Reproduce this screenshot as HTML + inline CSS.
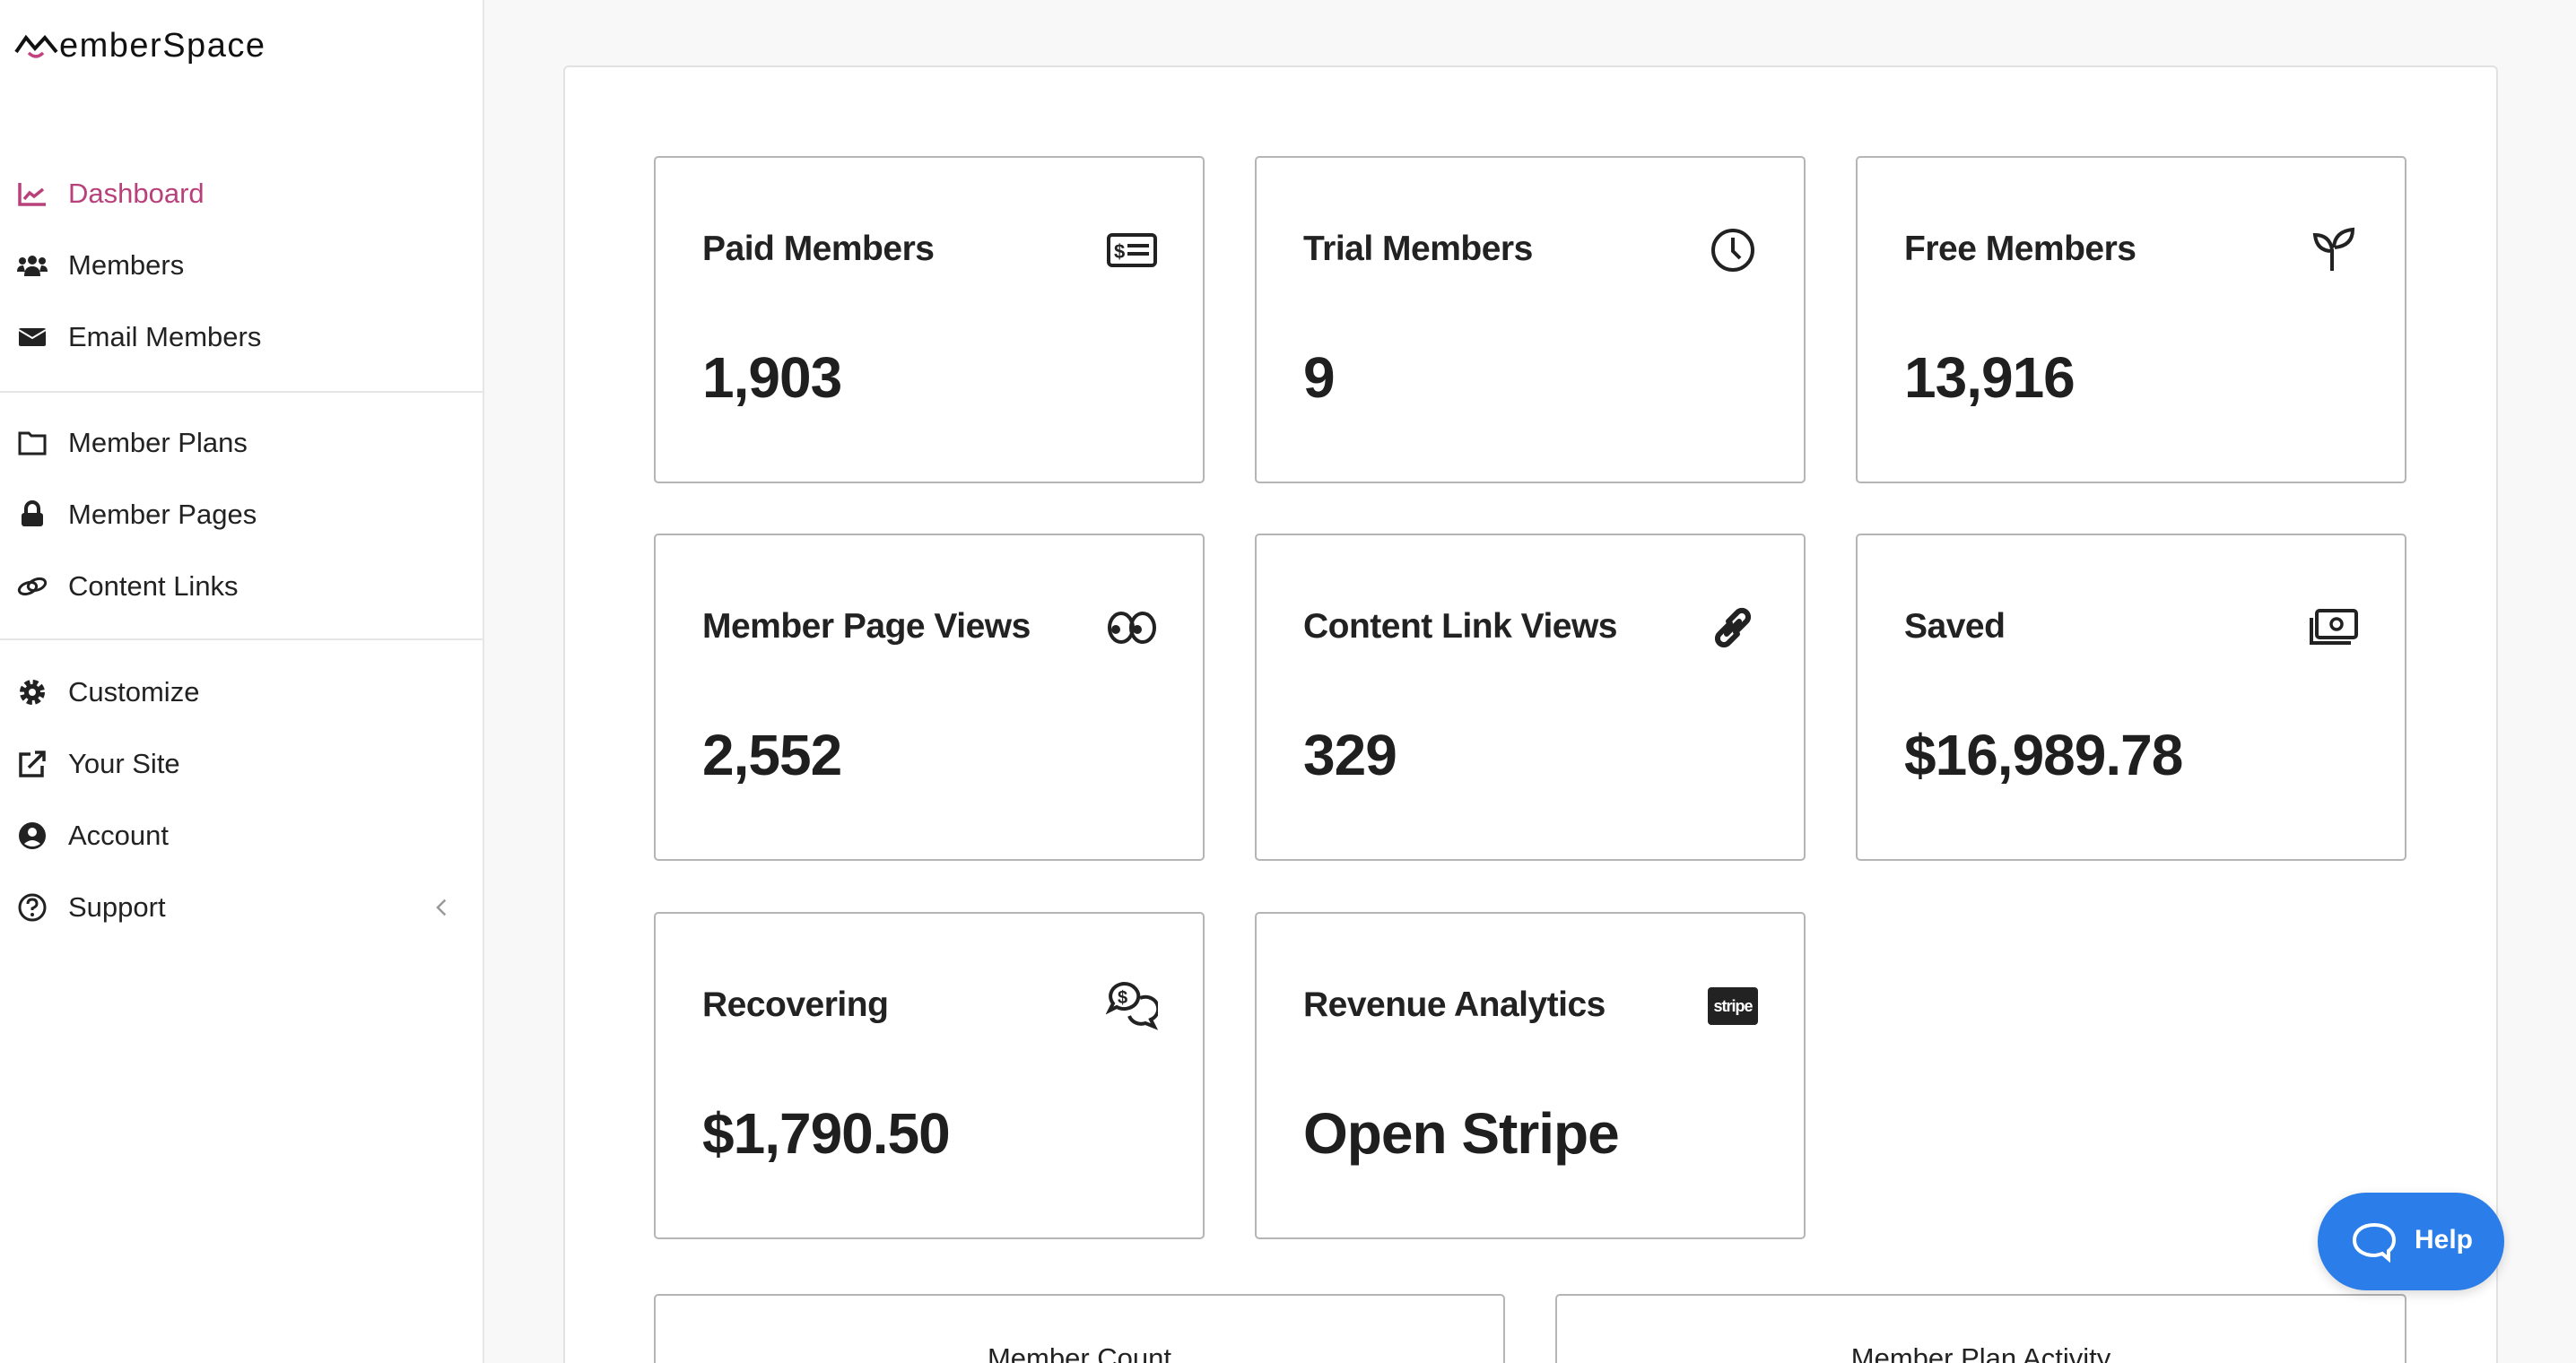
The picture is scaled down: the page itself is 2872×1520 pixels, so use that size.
<!DOCTYPE html>
<html><head><meta charset="utf-8"><style>
*{margin:0;padding:0;box-sizing:border-box}
html,body{width:2872px;height:1520px;overflow:hidden}
body{background:#f8f8f8;font-family:"Liberation Sans",sans-serif;color:#222;position:relative}
#side{position:absolute;left:0;top:0;width:540px;height:1520px;background:#fff;border-right:2px solid #e6e6e6}
.logo{position:absolute;left:16px;top:30px;font-size:38px;letter-spacing:1.5px;color:#111}
.nav{position:absolute;left:0;width:540px;height:60px;display:flex;align-items:center;font-size:31px;color:#222}
.nav svg{position:absolute;left:18px;width:36px;height:36px}
.nav span{position:absolute;left:76px}
.sep{position:absolute;left:0;width:540px;height:2px;background:#e6e6e6}
#main{position:absolute;left:628px;top:73px;width:2157px;height:1447px;background:#fff;border:2px solid #e2e2e2;border-bottom:none;border-radius:6px 6px 0 0}
.card{position:absolute;width:614px;height:365px;border:2px solid #b5b5b5;border-radius:5px;background:#fff}
.card .t{position:absolute;left:52px;top:80px;font-size:39px;font-weight:bold;color:#222;letter-spacing:-0.5px}
.card .v{position:absolute;left:52px;top:208px;font-size:64px;font-weight:bold;color:#1f1f1f;letter-spacing:-1px}
.card svg{position:absolute;right:50px;top:74px;width:58px;height:58px}
.bc{position:absolute;top:1443px;width:949px;height:77px;border:2px solid #b5b5b5;border-bottom:none;border-radius:5px 5px 0 0;background:#fff;text-align:center;font-size:31px;padding-top:52px;overflow:hidden;white-space:nowrap}
#help{position:absolute;left:2584px;top:1330px;width:208px;height:109px;border-radius:55px;background:#2b7de9;box-shadow:0 4px 12px rgba(0,0,0,.15);color:#fff;font-weight:bold;font-size:30px}
</style></head><body>
<div id="side">
<div class="logo"><svg width="50" height="36" viewBox="0 0 50 36" style="vertical-align:-5px"><path d="M2 26 L13 10 L23 22 L34 10 L47 26" fill="none" stroke="#111" stroke-width="4"/><path d="M16 27 Q24 35 32 27" fill="none" stroke="#c2417e" stroke-width="3.5"/></svg>emberSpace</div>

<div class="nav" style="top:186px;color:#b8417b"><svg viewBox="0 0 36 36"><path d="M4 6V30H33M9 24L15 17L20 21L30 13" fill="none" stroke="#b8417b" stroke-width="3.5"/></svg><span>Dashboard</span></div>
<div class="nav" style="top:266px"><svg viewBox="0 0 36 36"><circle cx="18" cy="12" r="5" fill="#222"/><circle cx="7" cy="13" r="4" fill="#222"/><circle cx="29" cy="13" r="4" fill="#222"/><path d="M9 30Q9 19 18 19Q27 19 27 30Z M1 25Q1 18 8 18L10 25Z M35 25Q35 18 28 18L26 25Z" fill="#222"/></svg><span>Members</span></div>
<div class="nav" style="top:346px"><svg viewBox="0 0 36 36"><rect x="3" y="8" width="30" height="20" rx="2" fill="#222"/><path d="M3 10L18 19L33 10" stroke="#fff" stroke-width="2" fill="none"/></svg><span>Email Members</span></div>
<div class="sep" style="top:436px"></div>
<div class="nav" style="top:464px"><svg viewBox="0 0 36 36"><path d="M4 7H14L17 10H32V30H4Z" fill="none" stroke="#222" stroke-width="3"/></svg><span>Member Plans</span></div>
<div class="nav" style="top:544px"><svg viewBox="0 0 36 36"><path d="M11 16V11A7 7 0 0 1 25 11V16" fill="none" stroke="#222" stroke-width="4"/><rect x="6" y="16" width="24" height="15" rx="3" fill="#222"/></svg><span>Member Pages</span></div>
<div class="nav" style="top:624px"><svg viewBox="0 0 36 36"><ellipse cx="13" cy="20" rx="10" ry="6" fill="none" stroke="#222" stroke-width="3" transform="rotate(-20 13 20)"/><ellipse cx="23" cy="16" rx="10" ry="6" fill="none" stroke="#222" stroke-width="3" transform="rotate(-20 23 16)"/></svg><span>Content Links</span></div>
<div class="sep" style="top:712px"></div>
<div class="nav" style="top:742px"><svg viewBox="0 0 36 36"><circle cx="18" cy="18" r="10" fill="none" stroke="#222" stroke-width="8" stroke-dasharray="5 2.9"/><circle cx="18" cy="18" r="9" fill="#222"/><circle cx="18" cy="18" r="4" fill="#fff"/></svg><span>Customize</span></div>
<div class="nav" style="top:822px"><svg viewBox="0 0 36 36"><path d="M16 7H5V31H29V20" fill="none" stroke="#222" stroke-width="3.5"/><path d="M14 22L30 6M21 5H31V15" fill="none" stroke="#222" stroke-width="3.5"/></svg><span>Your Site</span></div>
<div class="nav" style="top:902px"><svg viewBox="0 0 36 36"><circle cx="18" cy="18" r="15" fill="#222"/><circle cx="18" cy="14" r="5" fill="#fff"/><path d="M9 27Q18 19 27 27Q18 33 9 27Z" fill="#fff"/></svg><span>Account</span></div>
<div class="nav" style="top:982px"><svg viewBox="0 0 36 36"><circle cx="18" cy="18" r="14" fill="none" stroke="#222" stroke-width="3"/><path d="M13 14Q13 9 18 9Q23 9 23 14Q23 17 18 19V21" fill="none" stroke="#222" stroke-width="3"/><circle cx="18" cy="26" r="2" fill="#222"/></svg><span>Support</span><svg viewBox="0 0 36 36" style="left:478px;width:30px;height:30px"><path d="M22 8L12 18L22 28" fill="none" stroke="#999" stroke-width="3"/></svg></div>
</div>

<div id="main"></div>

<div class="card" style="left:729px;top:174px"><div class="t">Paid Members</div><div class="v">1,903</div><svg viewBox="0 0 58 58"><rect x="3" y="12" width="52" height="34" rx="4" fill="none" stroke="#222" stroke-width="4"/><text x="9" y="38" font-size="22" font-weight="bold" font-family="Liberation Sans" fill="#222">$</text><path d="M24 24H48M24 33H48" stroke="#222" stroke-width="4"/></svg></div>
<div class="card" style="left:1399px;top:174px"><div class="t">Trial Members</div><div class="v">9</div><svg viewBox="0 0 58 58"><circle cx="29" cy="29" r="22" fill="none" stroke="#222" stroke-width="4"/><path d="M29 15V30L37 38" fill="none" stroke="#222" stroke-width="4"/></svg></div>
<div class="card" style="left:2069px;top:174px"><div class="t">Free Members</div><div class="v">13,916</div><svg viewBox="0 0 58 58"><path d="M27 52V28M27 30Q10 30 8 12Q24 12 27 28M29 26Q30 8 50 6Q50 24 30 26" fill="none" stroke="#222" stroke-width="4"/></svg></div>
<div class="card" style="left:729px;top:595px"><div class="t">Member Page Views</div><div class="v">2,552</div><svg viewBox="0 0 58 58"><ellipse cx="17" cy="29" rx="13" ry="16" fill="none" stroke="#222" stroke-width="4"/><ellipse cx="41" cy="29" rx="13" ry="16" fill="none" stroke="#222" stroke-width="4"/><circle cx="11" cy="31" r="5" fill="#222"/><circle cx="35" cy="31" r="5" fill="#222"/></svg></div>
<div class="card" style="left:1399px;top:595px"><div class="t">Content Link Views</div><div class="v">329</div><svg viewBox="0 0 58 58"><path d="M26 24L14 36A7 7 0 0 0 24 46L34 36M32 34L44 22A7 7 0 0 0 34 12L24 22M22 36L36 22" fill="none" stroke="#222" stroke-width="6" stroke-linecap="round"/></svg></div>
<div class="card" style="left:2069px;top:595px"><div class="t">Saved</div><div class="v">$16,989.78</div><svg viewBox="0 0 58 58"><rect x="10" y="10" width="44" height="30" rx="3" fill="none" stroke="#222" stroke-width="4"/><circle cx="32" cy="25" r="6" fill="none" stroke="#222" stroke-width="3.5"/><path d="M4 18V46H48" fill="none" stroke="#222" stroke-width="4"/></svg></div>
<div class="card" style="left:729px;top:1017px"><div class="t">Recovering</div><div class="v">$1,790.50</div><svg viewBox="0 0 58 58"><path d="M20 4A16 14 0 1 1 12 30L4 34L8 26A16 14 0 0 1 20 4Z" fill="none" stroke="#222" stroke-width="4"/><text x="13" y="26" font-size="20" font-weight="bold" font-family="Liberation Sans" fill="#222">$</text><path d="M38 20A14 13 0 0 1 50 44L54 52L44 48A14 13 0 0 1 26 40" fill="none" stroke="#222" stroke-width="4"/></svg></div>
<div class="card" style="left:1399px;top:1017px"><div class="t">Revenue Analytics</div><div class="v">Open Stripe</div><svg viewBox="0 0 58 58"><rect x="1" y="8" width="56" height="42" rx="4" fill="#222"/><text x="29" y="35" text-anchor="middle" font-size="18" font-weight="bold" font-family="Liberation Sans" fill="#fff" letter-spacing="-1">stripe</text></svg></div>

<div class="bc" style="left:729px">Member Count</div>
<div class="bc" style="left:1734px">Member Plan Activity</div>

<div id="help"><svg width="52" height="46" viewBox="0 0 52 46" style="position:absolute;left:37px;top:32px"><path d="M26 4C13 4 4 11 4 21C4 31 13 38 26 38C29 38 32 37 35 36L42 42L42 33C46 30 48 26 48 21C48 11 39 4 26 4Z" fill="none" stroke="#fff" stroke-width="4"/></svg><span style="position:absolute;left:108px;top:36px">Help</span></div>
</body></html>
